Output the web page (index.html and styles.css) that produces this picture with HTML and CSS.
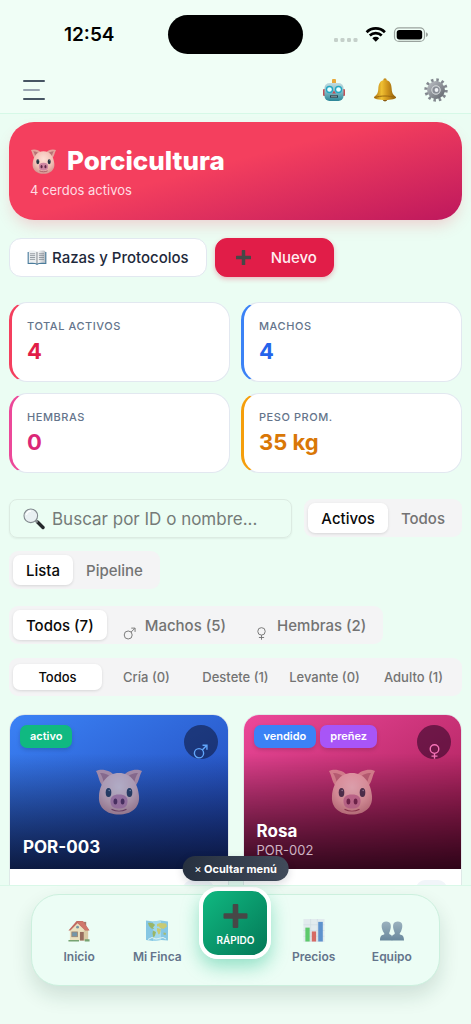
FILE: index.html
```html
<!DOCTYPE html>
<html lang="es">
<head>
<meta charset="utf-8">
<meta name="viewport" content="width=device-width, initial-scale=1">
<title>Porcicultura</title>
<link rel="stylesheet" href="styles.css">
</head>
<body>
<svg class="sprite" width="0" height="0" aria-hidden="true">
  <defs>
    <radialGradient id="pigSkin" cx=".5" cy=".35" r=".7"><stop offset="0" stop-color="#fde0d6"/><stop offset=".6" stop-color="#f2bfb4"/><stop offset="1" stop-color="#cf8f8c"/></radialGradient>
    <linearGradient id="robotFace" x1="0" y1="0" x2="0" y2="1"><stop offset="0" stop-color="#c3dce0"/><stop offset=".5" stop-color="#7fb9c4"/><stop offset="1" stop-color="#2b8597"/></linearGradient>
    <linearGradient id="bellGold" x1="0" y1="0" x2="1" y2="0"><stop offset="0" stop-color="#a97012"/><stop offset=".35" stop-color="#f0c032"/><stop offset=".6" stop-color="#d0951b"/><stop offset="1" stop-color="#8d5c0c"/></linearGradient>
    <linearGradient id="steel" x1="0" y1="0" x2="1" y2="1"><stop offset="0" stop-color="#b4b8bd"/><stop offset="1" stop-color="#686d74"/></linearGradient>
    <linearGradient id="page" x1="0" y1="0" x2="1" y2="0"><stop offset="0" stop-color="#ffffff"/><stop offset="1" stop-color="#b9bec4"/></linearGradient>
    <linearGradient id="people" x1="0" y1="0" x2="0" y2="1"><stop offset="0" stop-color="#8199ad"/><stop offset="1" stop-color="#3e617f"/></linearGradient>
  </defs>
  <symbol id="pig" viewBox="0 0 48 46">
    <path d="M1 2C7-1 16 2 19 6L8 17C4 14 4 7 1 2Z" fill="#e3a49c"/><path d="M47 2C41-1 32 2 29 6L40 17C44 14 44 7 47 2Z" fill="#e3a49c"/>
    <path d="M5 4C10 4 14 6 15 8L9 14C8 10 7 7 5 4ZM43 4C38 4 34 6 33 8L39 14C40 10 41 7 43 4Z" fill="#b87375"/>
    <path d="M24 4C36 4 43 14 44 27C45 39 36 45.500 24 45.500S3 39 4 27C5 14 12 4 24 4Z" fill="url(#pigSkin)"/>
    <ellipse cx="13.500" cy="23.500" rx="2.800" ry="4.500" fill="#263443"/><ellipse cx="34.500" cy="23.500" rx="2.800" ry="4.500" fill="#263443"/>
    <circle cx="14.200" cy="21.500" r=".8" fill="#8f9dab"/><circle cx="35.200" cy="21.500" r=".8" fill="#8f9dab"/>
    <path d="M24 25.500C30 25.500 33 28 32.500 33C32 38 29 39.500 24 39.500S16 38 15.500 33C15 28 18 25.500 24 25.500Z" fill="#cf86a2"/>
    <ellipse cx="20.400" cy="32.500" rx="1.900" ry="3" fill="#5d2545"/><ellipse cx="27.600" cy="32.500" rx="1.900" ry="3" fill="#5d2545"/>
    <path d="M17 40.500C21 42.500 27 42.500 31 40.500" fill="none" stroke="#8d3c4c" stroke-width="1.200" stroke-linecap="round"/>
  </symbol>
  <symbol id="robot" viewBox="0 0 24 24">
    <rect x="10" y="1" width="4" height="6" rx="1" fill="#e9a93b"/><rect x="1" y="11" width="3" height="7" rx="1" fill="#c34e55"/><rect x="20" y="11" width="3" height="7" rx="1" fill="#c34e55"/>
    <rect x="2.500" y="5" width="19" height="18" rx="5" fill="url(#robotFace)"/>
    <circle cx="7.500" cy="11.500" r="3" fill="#e9feff" stroke="#22a6c2" stroke-width="1.300"/><circle cx="16.500" cy="11.500" r="3" fill="#e9feff" stroke="#22a6c2" stroke-width="1.300"/>
    <path d="M12 12.500L13.800 15.500H10.200Z" fill="#c44b54"/><rect x="8" y="17" width="8" height="3" rx="1.200" fill="#25414c"/><path d="M10 17.500V19.500M12 17.500V19.500M14 17.500V19.500" stroke="#e7edf0" stroke-width=".8"/>
  </symbol>
  <symbol id="bell" viewBox="0 0 24 24">
    <circle cx="12" cy="21" r="2.400" fill="#8a5a10"/><circle cx="12" cy="2" r="1.700" fill="#c48d1d"/>
    <path d="M12 2C17 2 18.500 6 18.700 11C18.900 15.500 20.500 17 23 19C24 21 18 22 12 22S0 21 1 19C3.500 17 5.100 15.500 5.300 11C5.500 6 7 2 12 2Z" fill="url(#bellGold)"/>
    <path d="M2 19.500C7 17.500 17 17.500 22 19.500" fill="none" stroke="#9a680f" stroke-width="1"/>
  </symbol>
  <symbol id="gear" viewBox="0 0 24 24">
    <circle cx="12" cy="12" r="9.900" fill="none" stroke="#82878e" stroke-width="3.600" stroke-dasharray="2.400 2.784"/>
    <circle cx="12" cy="12" r="6.700" fill="none" stroke="url(#steel)" stroke-width="4.400"/>
    <circle cx="12" cy="12" r="4.600" fill="#c4c7cb"/><circle cx="12" cy="12" r="3.500" fill="#888d95"/><circle cx="12.500" cy="12" r="1.900" fill="#eef1f4"/>
  </symbol>
  <symbol id="book" viewBox="0 0 20 16">
    <path d="M0 2H20V15H12L10 16L8 15H0Z" fill="#4a7c9c"/><path d="M1.200 1C5 .3 8 .6 10 2V14.500C8 13.400 5 13.200 1.200 13.800Z" fill="#eceff1"/><path d="M18.800 1C15 .3 12 .6 10 2V14.500C12 13.400 15 13.200 18.800 13.800Z" fill="url(#page)"/>
    <path d="M2.500 4H8M2.500 6H8M2.500 8H8M2.500 10H8M12 4H17.500M12 6H17.500M12 8H17.500M12 10H17.500" stroke="#7b838b" stroke-width=".8"/><path d="M10 2V14.500" stroke="#555d66" stroke-width=".8"/>
  </symbol>
  <symbol id="plus" viewBox="0 0 24 24"><path d="M9.200 1Q9.200 0 10.200 0H13.800Q14.800 0 14.800 1V9.200H23Q24 9.200 24 10.200V13.800Q24 14.800 23 14.800H14.800V23Q14.800 24 13.800 24H10.200Q9.200 24 9.200 23V14.800H1Q0 14.800 0 13.800V10.200Q0 9.200 1 9.200H9.200Z" fill="#474747"/></symbol>
  <symbol id="search" viewBox="0 0 22 22">
    <path d="M14.500 14L20 19.500" stroke="#25282b" stroke-width="3.400" stroke-linecap="round"/><path d="M12 12L14.500 14.500" stroke="#8b9094" stroke-width="2"/>
    <circle cx="7.800" cy="7.800" r="6.800" fill="#e9f0f2" stroke="#82898e" stroke-width="1.100"/><path d="M3.500 7A4.500 4.500 0 0 1 8 3.200" fill="none" stroke="#fff" stroke-width="1.200"/>
  </symbol>
  <symbol id="male" viewBox="0 0 14 14"><circle cx="5.600" cy="8.600" r="4.300"/><path d="M8.700 5.500L12.700 1.500M8.900 1.200H13V5.300"/></symbol>
  <symbol id="female" viewBox="0 0 14 14"><circle cx="7" cy="4.700" r="4"/><path d="M7 8.700V13.700M4.200 11.300H9.800"/></symbol>
  <symbol id="house" viewBox="0 0 24 24">
    <rect x="16.500" y="3" width="3" height="6" fill="#8e4b3e"/><path d="M2.500 11L10 4L18 11L21.500 12V22.500H2.500Z" fill="#ecd9ad"/><path d="M17 11H21.500V22.500H17Z" fill="#d3ba8b"/>
    <path d="M1 12L9.500 2H16L23 12H18.500L10.500 4.500L3 12Z" fill="#b33c32"/><path d="M10.500 3.500L16 2L22.500 11.500H18.500Z" fill="#c74c3f"/>
    <rect x="4.500" y="13.500" width="6" height="5" fill="#4e7590" stroke="#865c3f" stroke-width=".8"/><rect x="13" y="13.500" width="4" height="9" fill="#7c3f2d"/><circle cx="10.500" cy="8.500" r="1.500" fill="#54768a"/>
    <path d="M1 22H12V23.500H1ZM18 21H23V23.500H18Z" fill="#4f8546"/>
  </symbol>
  <symbol id="map" viewBox="0 0 24 22">
    <path d="M1 1L8 2L16 1L23 2V21L16 20.500L8 21.500L1 20.500Z" fill="#65b5dd"/><path d="M8 2L16 1V20.500L8 21.500Z" fill="#8acdea"/>
    <path d="M3 3.500C6 3 9 4 10 5.500L8 8L9.500 9.500L6.500 9L4 6.500ZM8 11L11 12.500L10 16L8.500 18.500L7.500 14Z" fill="#7f9f38"/><path d="M12 4.500L15 3.500L21 4L22 7L18.500 9.500L15 8.500L14 7L12 7ZM12 8.500L16 9.500L15 14L13.500 15L12 11Z" fill="#bdb948"/><path d="M18.500 13L21 13.500L20.500 15.500L18.500 15Z" fill="#8fa341"/><path d="M3 20L7 18L11 19.500L18 18L21 19.500" stroke="#d9f0f4" fill="none"/>
  </symbol>
  <symbol id="chart" viewBox="0 0 22 24">
    <rect width="22" height="24" fill="#dfe6ec"/><path d="M0 6H22M0 12H22M0 18H22M7.500 0V24M14.500 0V24" stroke="#c6d2dc" stroke-width=".7"/>
    <rect x="2" y="9" width="4.500" height="14.500" fill="#2cb83d"/><rect x="8.700" y="13" width="4.500" height="10.500" fill="#cf3a34"/><rect x="15.400" y="3" width="4.800" height="20.500" fill="#2f6fc0"/>
  </symbol>
  <symbol id="team" viewBox="0 0 24 20">
    <path d="M0 20C0 15 2 14.500 4 14C5 13.500 4 12.500 3 11C.5 5 1.500 1 6.200 1S12 5 9.800 11C9 12.500 9 13.500 10 14C12 14.500 12.300 16 12.300 20Z" fill="url(#people)"/>
    <path d="M11.700 20C11.700 16 12 14.500 14 14C15 13.500 15 12.500 14.200 11C12 5 13 1 17.800 1S23.500 5 21 11C20 12.500 19 13.500 20 14C22 14.500 24 15 24 20Z" fill="url(#people)"/>
  </symbol>
</svg>

<div class="app">
  <header class="top">
    <div class="status">
      <div class="status-side"><time>12:54</time></div>
      <div class="island"></div>
      <div class="status-side">
        <svg width="94" height="18" viewBox="0 0 94 18" role="img" aria-label="Wi-Fi y batería">
          <g fill="#c5d0ca"><rect y="12" width="4" height="4" rx="1.300"/><rect x="6.500" y="12" width="4" height="4" rx="1.300"/><rect x="13" y="12" width="4" height="4" rx="1.300"/><rect x="19.500" y="12" width="4" height="4" rx="1.300"/></g>
          <g fill="none" stroke="#000" stroke-width="2.700"><path d="M32.600 6.200A13 13 0 0 1 50.900 6.200"/><path d="M35.800 9.500A8.500 8.500 0 0 1 47.700 9.500"/></g>
          <path d="M38.300 12.200A5 5 0 0 1 45.200 12.200L41.750 15.800Z"/>
          <rect x="60.500" y="1.800" width="30" height="13.600" rx="4.500" fill="none" stroke="#99a29d" stroke-width="1.200"/><rect x="62.700" y="3.900" width="25.500" height="9.500" rx="2.700"/><path d="M92 6.300Q94 7 94 8.600T92 10.900Z" fill="#99a29d"/>
        </svg>
      </div>
    </div>
    <div class="toolbar">
      <button class="menu" aria-label="Abrir menú"><span></span><span></span><span></span></button>
      <div class="tools">
        <button aria-label="Asistente"><svg><use href="#robot"/></svg></button>
        <button aria-label="Notificaciones"><svg><use href="#bell"/></svg></button>
        <button aria-label="Ajustes"><svg><use href="#gear"/></svg></button>
      </div>
    </div>
  </header>

  <main class="content">
    <section class="hero">
      <h1><svg><use href="#pig"/></svg>Porcicultura</h1>
      <p>4 cerdos activos</p>
    </section>

    <div class="actions">
      <button class="action"><svg class="book"><use href="#book"/></svg>Razas y Protocolos</button>
      <button class="action primary"><svg class="plus"><use href="#plus"/></svg>Nuevo</button>
    </div>

    <section class="stats">
      <article class="stat rose"><h2>TOTAL ACTIVOS</h2><p>4</p></article>
      <article class="stat blue"><h2>MACHOS</h2><p>4</p></article>
      <article class="stat pink"><h2>HEMBRAS</h2><p>0</p></article>
      <article class="stat amber"><h2>PESO PROM.</h2><p>35 kg</p></article>
    </section>

    <div class="filters">
      <label class="search"><svg aria-hidden="true"><use href="#search"/></svg><input type="text" aria-label="Buscar" placeholder="Buscar por ID o nombre..."></label>
      <div class="segment"><button class="on">Activos</button><button>Todos</button></div>
      <div class="segment"><button class="on">Lista</button><button>Pipeline</button></div>
    </div>
    <div class="segment sexes">
      <button class="on">Todos (7)</button>
      <button><svg><use href="#male"/></svg>Machos (5)</button>
      <button><svg><use href="#female"/></svg>Hembras (2)</button>
    </div>
    <div class="segment stages">
      <button class="on">Todos</button><button>Cría (0)</button><button>Destete (1)</button><button>Levante (0)</button><button>Adulto (1)</button>
    </div>

    <section class="cards">
      <article class="card">
        <div class="photo male">
          <div class="photo-top"><span class="badge green">activo</span><span class="sex"><svg><use href="#male"/></svg></span></div>
          <svg class="pig"><use href="#pig"/></svg>
          <div class="caption"><h3>POR-003</h3></div>
        </div>
        <div class="details"><span class="chip"></span></div>
      </article>
      <article class="card">
        <div class="photo female">
          <div class="photo-top"><span class="badge sky">vendido</span><span class="badge violet">preñez</span><span class="sex"><svg><use href="#female"/></svg></span></div>
          <svg class="pig"><use href="#pig"/></svg>
          <div class="caption"><h3>Rosa</h3><p>POR-002</p></div>
        </div>
        <div class="details"><span class="chip"></span></div>
      </article>
    </section>
  </main>

  <footer class="dock">
    <button class="hide-menu"><span>×</span> Ocultar menú</button>
    <nav class="nav">
      <a href="#inicio"><svg><use href="#house"/></svg>Inicio</a>
      <a href="#finca"><svg><use href="#map"/></svg>Mi Finca</a>
      <button class="quick"><svg><use href="#plus"/></svg>RÁPIDO</button>
      <a href="#precios"><svg><use href="#chart"/></svg>Precios</a>
      <a href="#equipo"><svg><use href="#team"/></svg>Equipo</a>
    </nav>
  </footer>
</div>
</body>
</html>
```

FILE: styles.css
```css
* { box-sizing: border-box; }
body { margin: 0; font-family: Inter, "Liberation Sans", sans-serif; color: #0f172a; background: #ebfdf3; }
h1, h2, h3, p { margin: 0; }
button { font: inherit; border: 0; padding: 0; background: none; color: inherit; }
.sprite { position: absolute; }

.app { display: flex; flex-direction: column; height: 100vh; overflow: hidden; }

.top { background: #f0fef6; border-bottom: 1px solid #d6f9e7; flex: none; }
.status { display: flex; align-items: center; padding-top: 15px; }
.status-side { flex: 1; display: flex; justify-content: center; padding: 0 4px 0 15px; }
.status-side time { color: #000; font-size: 19px; font-weight: 600; line-height: 24px; }
.status-side:last-child { padding: 0 16px 0 4px; }
.island { width: 135px; height: 39px; border-radius: 20px; background: #000; }
.toolbar { display: flex; align-items: center; justify-content: space-between; height: 59px; padding: 16px 20px 4px 23px; }
.menu { display: flex; flex-direction: column; gap: 7px; width: 22px; }
.menu span { height: 2px; width: 100%; border-radius: 1px; background: #475563; }
.menu span:nth-child(2) { width: 17px; background: #9aa6b2; }
.tools { display: flex; gap: 21px; }
.tools button { width: 30px; height: 30px; display: grid; place-items: center; }
.tools svg { width: 24px; height: 24px; }

.content { flex: 1; min-height: 0; overflow: hidden; padding: 8px 9px 0; }
.hero { padding: 23px 21px 21px; color: #fff; border-radius: 25px; background: linear-gradient(165deg, #f43f5e 0%, #f43f5e 45%, #be185d 100%); box-shadow: 0 8px 16px -4px rgba(244, 63, 94, .25); }
.hero h1 { display: flex; align-items: center; gap: 10px; font-size: 26px; font-weight: 800; line-height: 32px; }
.hero h1 svg { width: 27px; height: 25px; }
.hero p { margin-top: 4px; font-size: 13px; line-height: 18px; color: #ffdce2; }

.actions { display: flex; gap: 8px; margin-top: 18px; }
.action { display: flex; align-items: center; height: 39px; padding: 0 17px; gap: 5px; border: 1px solid #e2e8f0; border-radius: 12px; background: #fff; color: #1e293b; font-size: 15px; font-weight: 500; }
.action.primary { gap: 20px; padding-left: 20px; padding-right: 16px; border-color: #e11d48; background: #e11d48; color: #ffeef1; box-shadow: 0 2px 5px rgba(225, 29, 72, .3); }
.book { width: 20px; height: 15px; }
.plus { width: 15px; height: 15px; }

.stats { display: grid; grid-template-columns: 1fr 1fr; gap: 11px; margin-top: 25px; }
.stat { height: 80px; padding: 16px 15px 0; background: #fff; border: 1px solid #e2e8f0; border-left-width: 3px; border-radius: 18px; }
.stat h2 { font-size: 11px; font-weight: 500; line-height: 15px; letter-spacing: .05em; color: #64748b; }
.stat p { margin-top: 3px; font-size: 22px; font-weight: 700; line-height: 28px; }
.rose { border-left-color: #f43f5e; } .rose p { color: #e11d48; }
.blue { border-left-color: #3b82f6; } .blue p { color: #2563eb; }
.pink { border-left-color: #ec4899; } .pink p { color: #db2777; }
.amber { border-left-color: #f59e0b; } .amber p { color: #d97706; }

.filters { display: flex; flex-wrap: wrap; gap: 13px 12px; margin-top: 26px; }
.search { flex: 1 1 240px; display: flex; align-items: center; gap: 7px; height: 39px; padding: 0 13px; border: 1px solid #dcebe2; border-radius: 8px; box-shadow: 0 1px 2px rgba(0, 0, 0, .06); }
.search svg { flex: none; width: 22px; height: 22px; }
.search input { width: 100%; min-width: 0; padding: 0; border: 0; outline: 0; background: none; font: 400 17px/24px Inter, sans-serif; }
.search input::placeholder { color: #757b78; opacity: 1; }
.segment { display: inline-flex; align-items: center; height: 38px; padding: 0 4px; border-radius: 9px; background: #f4f4f5; }
.segment button { display: flex; align-items: center; justify-content: center; height: 30px; padding: 0 13px; border-radius: 7px; font-size: 15px; font-weight: 500; color: #737373; white-space: nowrap; }
.segment .on { background: #fff; color: #0a0a0a; box-shadow: 0 1px 3px rgba(0, 0, 0, .12); }
.segment svg { width: 19px; height: 13px; margin-right: 6px; align-self: flex-end; fill: none; stroke: #737373; stroke-width: 1px; }
.sexes { display: flex; width: fit-content; margin-top: 17px; }
.stages { display: flex; margin-top: 14px; }
.stages button { flex: 1 1 0; min-width: 0; height: 26px; padding: 0; font-size: 13px; }

.cards { display: grid; grid-template-columns: 1fr 1fr; gap: 14px; margin-top: 18px; }
.card { overflow: hidden; border: 1px solid #dfe9e8; border-radius: 16px; background: #fff; }
.photo { position: relative; height: 154px; padding: 10px; color: #fff; }
.photo.male { background: linear-gradient(to top, rgba(5, 10, 30, .8), rgba(5, 10, 30, 0) 75%), linear-gradient(150deg, #3b82f6, #1e40af); }
.photo.female { background: linear-gradient(to top, rgba(20, 0, 12, .8), rgba(20, 0, 12, 0) 75%), linear-gradient(150deg, #ec4899, #9d174d); }
.photo-top { display: flex; align-items: flex-start; gap: 4px; }
.badge { padding: 0 10px; border-radius: 7px; font-size: 11px; font-weight: 600; line-height: 23px; box-shadow: 0 2px 4px rgba(0, 0, 0, .15); }
.green { background: #10b981; } .sky { background: #3b82f6; } .violet { background: #a855f7; }
.sex { display: flex; align-items: flex-end; justify-content: center; width: 34px; height: 34px; margin-left: auto; border-radius: 50%; background: rgba(10, 12, 35, .5); color: #60a5fa; }
.female .sex { background: rgba(50, 5, 40, .6); color: #f472b6; }
.sex svg { width: 15px; height: 15px; fill: none; stroke: currentColor; stroke-width: 1.3px; }
.pig { position: absolute; top: 54px; left: 50%; width: 49px; height: 46px; transform: translateX(-50%); opacity: .65; }
.caption { position: absolute; left: 13px; bottom: 11px; }
.caption h3 { font-size: 17px; font-weight: 700; line-height: 21px; }
.caption p { font-size: 13px; line-height: 16px; color: #cfb3c3; }
.details { display: flex; justify-content: flex-end; height: 100px; padding: 11px 14px; }
.chip { width: 31px; height: 18px; border-radius: 9px; background: #f1f5f9; }

.dock { position: relative; flex: none; padding: 8px 31px 38px; border-top: 1px solid #d9f8e8; background: #eefcf4; }
.hide-menu { position: absolute; bottom: 143px; left: 50%; height: 25px; padding: 0 12px; transform: translateX(-50%); border-radius: 13px; background: linear-gradient(90deg, #26303f, #414b5a); color: #fff; font-size: 11px; font-weight: 700; white-space: nowrap; box-shadow: 0 3px 8px rgba(15, 23, 42, .15); }
.hide-menu span { font-weight: 400; }
.nav { display: grid; grid-template-columns: repeat(5, 1fr); height: 92px; padding: 0 8px; border: 1px solid #ccf0de; border-radius: 28px; background: #ecfdf5; box-shadow: 0 10px 20px rgba(15, 60, 40, .14); }
.nav a { display: flex; flex-direction: column; align-items: center; gap: 7px; padding-top: 24px; color: #64748b; font-size: 12px; font-weight: 600; line-height: 16px; text-decoration: none; }
.nav a svg { width: 24px; height: 23px; opacity: .75; }
.quick { display: flex; flex-direction: column; align-items: center; justify-self: center; gap: 5px; width: 72px; height: 72px; margin-top: -8px; padding-top: 13px; border: 4px solid #fff; border-radius: 19px; background: linear-gradient(135deg, #10b981, #047857); color: #fff; font-size: 10px; font-weight: 600; line-height: 14px; box-shadow: 0 8px 18px rgba(16, 185, 129, .4); }
.quick svg { flex: none; width: 25px; height: 24px; }
```
